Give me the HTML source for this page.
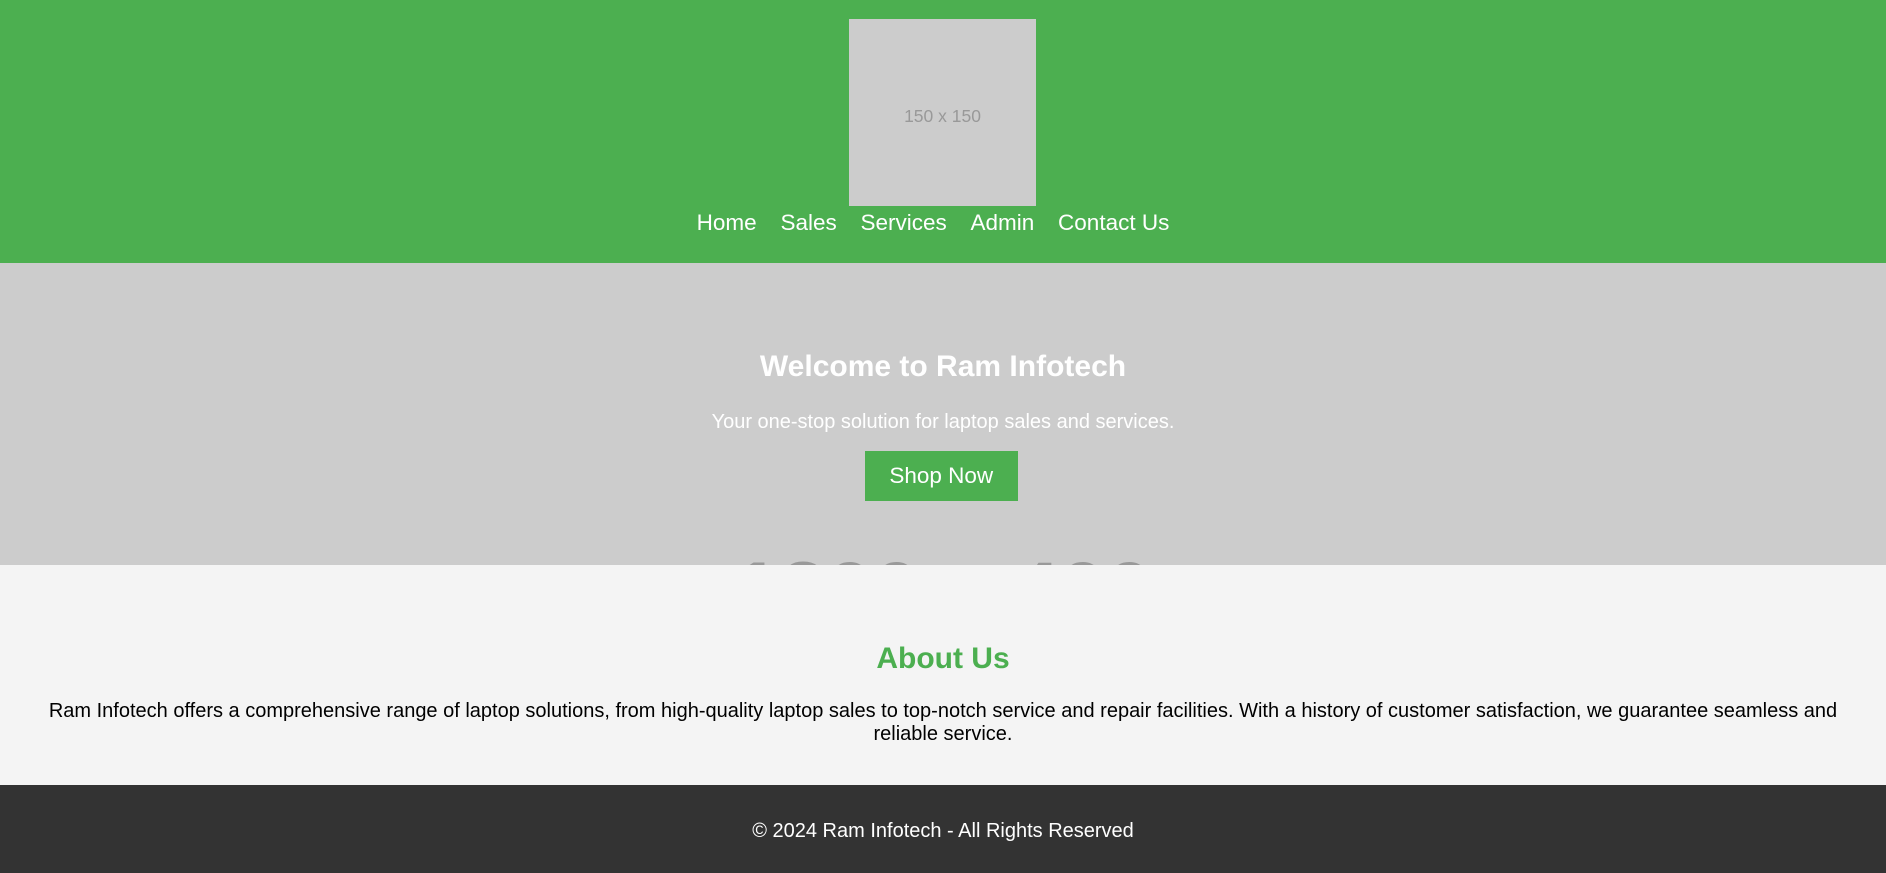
<!DOCTYPE html>
<html><head><meta charset="utf-8"><style>
html,body{margin:0;padding:0;}
body{zoom:1.25;font-family:"Liberation Sans",Arial,sans-serif;width:1508.8px;height:697.6px;overflow:hidden;}
header{background:#4caf50;height:210px;text-align:center;position:relative;}
.logo{position:absolute;left:679px;top:15px;width:150px;height:150px;background:#ccc;color:#999;font-size:14px;line-height:156px;text-align:center;}
nav{position:absolute;top:168px;left:-16px;right:0;text-align:center;font-size:18px;line-height:21px;}
nav a{color:#fff;text-decoration:none;margin:0 9.5px;}
.hero{background:#ccc;height:242px;position:relative;overflow:hidden;text-align:center;color:#fff;}
.hero .bg{position:absolute;left:0;right:0;top:230px;font-size:67px;line-height:67px;color:#999;text-align:center;font-weight:bold;}
.hero h2{position:absolute;left:0;right:0;top:68px;margin:0;font-size:24px;line-height:30px;}
.hero p{position:absolute;left:0;right:0;top:118px;margin:0;font-size:16px;line-height:20px;}
.btn{position:absolute;left:692px;top:151px;width:122px;height:40px;background:#4caf50;color:#fff;font-size:18px;line-height:40px;}
.about{background:#f4f4f4;height:176px;position:relative;text-align:center;}
.about h2{position:absolute;left:0;right:0;top:60px;margin:0;color:#4caf50;font-size:24px;line-height:30px;}
.about p{position:absolute;left:0;right:0;top:108px;margin:0;font-size:16px;line-height:18.5px;color:#000;}
footer{background:#333;height:70px;color:#fff;text-align:center;font-size:16px;line-height:20px;position:relative;}
footer p{position:absolute;left:0;right:0;top:27px;margin:0;}
</style></head><body>
<header><div class="logo">150 x 150</div>
<nav><a>Home</a><a>Sales</a><a>Services</a><a>Admin</a><a>Contact Us</a></nav></header>
<section class="hero"><div class="bg">1200 x 400</div>
<h2>Welcome to Ram Infotech</h2>
<p>Your one-stop solution for laptop sales and services.</p>
<div class="btn">Shop Now</div></section>
<section class="about"><h2>About Us</h2>
<p>Ram Infotech offers a comprehensive range of laptop solutions, from high-quality laptop sales to top-notch service and repair facilities. With a history of customer satisfaction, we guarantee seamless and<br>reliable service.</p></section>
<footer><p>© 2024 Ram Infotech - All Rights Reserved</p></footer>
</body></html>
